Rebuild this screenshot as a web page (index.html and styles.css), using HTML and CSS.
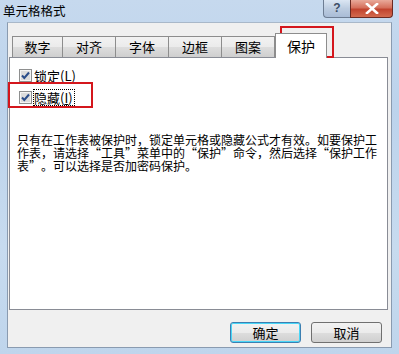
FILE: index.html
```html
<!DOCTYPE html>
<html>

<head>
  <meta http-equiv="Content-Type" content="text/html; charset=UTF-8">
  <title>单元格格式</title>
  <link rel="stylesheet" href="styles.css">
</head>

<body>

  <div id="ventana">

    <div id="titulo">
      <span id="texto_titulo">单元格格式</span>
      <div id="botones_titulo">
        <div class="bt_ayuda">?</div>
        <div class="bt_cerrar">
          <svg width="14" height="11" viewBox="0 0 14 11">
            <path d="M2 1 L12 10 M12 1 L2 10" stroke="#fff" stroke-width="2.6" stroke-linecap="square" />
          </svg>
        </div>
      </div>
    </div>

    <div id="cliente">

      <div id="pestanas">
        <div class="pestana">数字</div>
        <div class="pestana">对齐</div>
        <div class="pestana">字体</div>
        <div class="pestana">边框</div>
        <div class="pestana">图案</div>
        <div class="pestana activa">保护</div>
      </div>

      <div id="panel">
        <label class="opcion">
          <svg class="check" width="13" height="13" viewBox="0 0 13 13">
            <rect x="0.5" y="0.5" width="12" height="12" fill="#f4f4f4" stroke="#8e8f8f" />
            <rect x="2" y="2" width="9" height="9" fill="#dcdcdc" />
            <path d="M3 6.5 L5.3 9 L10 3.5" stroke="#2a4d8a" stroke-width="2" fill="none" />
          </svg>
          <span>锁定(<u>L</u>)</span>
        </label>
        <label class="opcion">
          <svg class="check" width="13" height="13" viewBox="0 0 13 13">
            <rect x="0.5" y="0.5" width="12" height="12" fill="#f4f4f4" stroke="#8e8f8f" />
            <rect x="2" y="2" width="9" height="9" fill="#dcdcdc" />
            <path d="M3 6.5 L5.3 9 L10 3.5" stroke="#2a4d8a" stroke-width="2" fill="none" />
          </svg>
          <span class="foco">隐藏(<u>I</u>)</span>
        </label>

        <p id="nota">
          只有在工作表被保护时，锁定单元格或隐藏公式才有效。如要保护工<br>
          作表，请选择<span class="abre">“</span>工具<span class="cierra">”</span>菜单中的<span class="abre">“</span>保护<span class="cierra">”</span>命令，然后选择<span class="abre">“</span>保护工作<br>
          表<span class="cierra">”</span>。可以选择是否加密码保护。
        </p>
      </div>

      <div id="acciones">
        <div class="boton defecto">确定</div>
        <div class="boton">取消</div>
      </div>

    </div>

    <div class="marca" id="marca_pestana"></div>
    <div class="marca" id="marca_opcion"></div>

  </div>

</body>

</html>
```

FILE: styles.css
```css
body {
  margin: 0;
  font-family: "Noto Sans CJK SC", "Liberation Sans", sans-serif;
  font-size: 12px;
  color: #000;
}

#ventana {
  position: relative;
  width: 399px;
  height: 354px;
  box-sizing: border-box;
  padding: 0 7px 6px 7px;
  background: linear-gradient(to bottom, #c6d9ee 0%, #bcd3ec 30%, #c7dbef 70%, #bfd5ec 100%);
  display: flex;
  flex-direction: column;
}

#titulo {
  height: 22px;
  display: flex;
  align-items: flex-start;
  justify-content: space-between;
}

#texto_titulo {
  margin-left: -4px;
  margin-top: 3px;
  font-size: 12.5px;
  line-height: 16px;
}

#botones_titulo {
  display: flex;
  margin-right: -1px;
}

.bt_ayuda {
  width: 27px;
  height: 18px;
  box-sizing: border-box;
  border: 1px solid #6d7d93;
  border-top: 0;
  border-right: 0;
  border-radius: 0 0 0 4px;
  background: linear-gradient(to bottom, #dbe6f3, #bccce0 50%, #a9bcd6);
  color: #3c4d66;
  font-family: "Liberation Sans", sans-serif;
  font-weight: bold;
  font-size: 12px;
  text-align: center;
  line-height: 16px;
}

.bt_cerrar {
  width: 43px;
  height: 18px;
  box-sizing: border-box;
  border: 1px solid #6b2a22;
  border-top: 0;
  border-radius: 0 0 4px 0;
  background: linear-gradient(to bottom, #e9a99a, #d5705c 45%, #c1432e 55%, #d36a4e);
  display: flex;
  align-items: center;
  justify-content: center;
}

#cliente {
  flex: 1;
  background: #f0f0f0;
  border: 1px solid #8a9bb0;
  border-top-color: #a9b8c9;
  display: flex;
  flex-direction: column;
}

#pestanas {
  display: flex;
  margin: 11px 0 0 4px;
  height: 23px;
  align-items: flex-end;
  position: relative;
  z-index: 1;
}

.pestana {
  width: 54px;
  height: 21px;
  box-sizing: border-box;
  border: 1px solid #8d8d8d;
  border-bottom: 0;
  margin-right: -1px;
  background: linear-gradient(to bottom, #f2f2f2, #ebebeb 50%, #dddddd 51%, #cfcfcf);
  text-align: center;
  font-size: 13px;
  line-height: 20px;
}

.pestana:first-child {
  width: 51px;
}

.pestana.activa {
  width: 52px;
  height: 25px;
  margin-bottom: -1px;
  margin-left: 1px;
  background: #fff;
  line-height: 24px;
  font-size: 14px;
}

#panel {
  margin: 0 3px 0 1px;
  height: 253px;
  background: #fff;
  border: 1px solid #898c95;
  padding: 9px 0 0 9px;
  box-sizing: border-box;
  display: flex;
  flex-direction: column;
  align-items: flex-start;
}

.opcion {
  display: flex;
  align-items: center;
  height: 16px;
  margin-bottom: 4px;
  font-size: 13px;
}

.opcion:nth-child(2) {
  margin-top: 2px;
}

.check {
  margin-right: 2px;
}

.foco {
  outline: 1px dotted #000;
  outline-offset: 0;
  padding-right: 1px;
  line-height: 15px;
}

#nota {
  margin: 24px 0 0 -2px;
  font-size: 12px;
  line-height: 13px;
  white-space: nowrap;
}

.abre,
.cierra {
  display: inline-block;
  width: 12px;
}

.abre {
  text-align: right;
}

.cierra {
  text-align: left;
}

#acciones {
  display: flex;
  justify-content: flex-end;
  gap: 10px;
  margin: 12px 9px 0 0;
}

.boton {
  width: 71px;
  height: 21px;
  box-sizing: border-box;
  border: 1px solid #707070;
  border-radius: 3px;
  background: linear-gradient(to bottom, #f2f2f2, #ebebeb 50%, #dddddd 51%, #cfcfcf);
  text-align: center;
  font-size: 13px;
  line-height: 19px;
}

.boton.defecto {
  border-color: #3c7fb1;
  box-shadow: inset 0 0 0 1px #48d6f7;
}

.marca {
  position: absolute;
  border: 2px solid #d4161c;
}

#marca_pestana {
  left: 280px;
  top: 26px;
  width: 50px;
  height: 28px;
}

#marca_opcion {
  left: 8px;
  top: 82px;
  width: 81px;
  height: 22px;
}
```
